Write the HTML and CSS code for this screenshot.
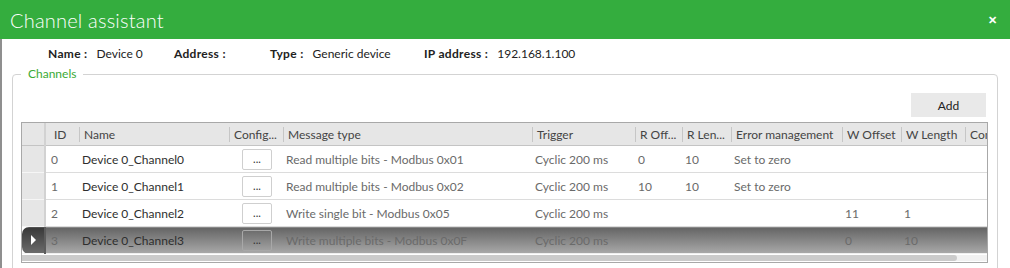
FILE: index.html
```html
<!DOCTYPE html>
<html lang="en">
<head>
    <meta charset="UTF-8">
    <title>Channel assistant</title>
    <link rel="stylesheet" href="styles.css">
</head>
<body>
    <div class="window">
        <header class="titlebar">
            <h1>Channel assistant</h1>
            <span class="close">&#x2715;</span>
        </header>

        <div class="window-body">
            <div class="device-info">
                <span class="field field-name"><b>Name :</b> Device 0</span>
                <span class="field field-address"><b>Address :</b></span>
                <span class="field field-type"><b>Type :</b> Generic device</span>
                <span class="field"><b>IP address :</b> 192.168.1.100</span>
            </div>

            <fieldset class="channels">
                <legend>Channels</legend>
                <div class="toolbar">
                    <button class="btn-add">Add</button>
                </div>

                <div class="grid">
                    <table>
                        <colgroup>
                            <col style="width:23px">
                            <col style="width:34px">
                            <col style="width:150px">
                            <col style="width:54px">
                            <col style="width:249px">
                            <col style="width:103px">
                            <col style="width:47px">
                            <col style="width:49px">
                            <col style="width:111px">
                            <col style="width:59px">
                            <col style="width:64px">
                            <col style="width:75px">
                        </colgroup>
                        <thead>
                            <tr>
                                <th class="row-head"></th>
                                <th class="first">ID</th>
                                <th>Name</th>
                                <th>Config...</th>
                                <th>Message type</th>
                                <th>Trigger</th>
                                <th>R Off...</th>
                                <th>R Len...</th>
                                <th>Error management</th>
                                <th>W Offset</th>
                                <th>W Length</th>
                                <th>Comment</th>
                            </tr>
                        </thead>
                        <tbody id="rows">
                            <!-- rows added by script -->
                        </tbody>
                    </table>
                    <div class="hscroll"><div class="thumb"></div></div>
                </div>
            </fieldset>
        </div>
    </div>

    <script>
        const channels = [
            { id: 0, type: "Read multiple bits - Modbus 0x01", rOff: "0", rLen: "10", err: "Set to zero", wOff: "", wLen: "" },
            { id: 1, type: "Read multiple bits - Modbus 0x02", rOff: "10", rLen: "10", err: "Set to zero", wOff: "", wLen: "" },
            { id: 2, type: "Write single bit - Modbus 0x05", rOff: "", rLen: "", err: "", wOff: "11", wLen: "1" },
            { id: 3, type: "Write multiple bits - Modbus 0x0F", rOff: "", rLen: "", err: "", wOff: "0", wLen: "10" }
        ];
        const selected = 3;

        const rows = document.getElementById('rows');

        channels.forEach((ch) => {
            const tr = document.createElement('tr');
            if (ch.id === selected) tr.classList.add('selected');

            tr.innerHTML = `
                <td class="row-head">${ch.id === selected ? '<span class="caret"></span>' : ''}</td>
                <td class="muted id">${ch.id}</td>
                <td class="name">Device 0_Channel${ch.id}</td>
                <td class="config"><button class="btn-dots">...</button></td>
                <td class="muted">${ch.type}</td>
                <td class="muted">Cyclic 200 ms</td>
                <td class="muted">${ch.rOff}</td>
                <td class="muted">${ch.rLen}</td>
                <td class="muted">${ch.err}</td>
                <td class="muted">${ch.wOff}</td>
                <td class="muted">${ch.wLen}</td>
                <td></td>
            `;
            rows.appendChild(tr);
        });
    </script>
</body>
</html>
```

FILE: styles.css
```css
html, body {
    margin: 0;
    padding: 0;
    background-color: #fff;
}

body {
    font-family: Lato, "Open Sans", sans-serif;
    font-size: 12px;
    color: #222;
    width: 1010px;
    height: 268px;
    overflow: hidden;
}

.window {
    height: 268px;
}

.titlebar {
    height: 39px;
    background-color: #34ad3e;
    color: #fff;
    display: flex;
    align-items: center;
    justify-content: space-between;
    padding: 0 13px 0 10px;
}

.titlebar h1 {
    margin: 0;
    font-size: 20px;
    font-weight: 300;
    letter-spacing: 0.2px;
}

.close {
    font-size: 11px;
    font-weight: bold;
}

.window-body {
    border-left: 2px solid #8f8f8f;
    height: 229px;
    box-sizing: border-box;
    padding: 6px 12px 0 10px;
}

.device-info {
    display: flex;
    align-items: center;
    height: 16px;
    padding-left: 36px;
    margin-bottom: 5px;
}

.device-info .field {
    white-space: nowrap;
}

.device-info .field-name {
    width: 126px;
}

.device-info .field-address {
    width: 96px;
}

.device-info .field-type {
    width: 154px;
}

.device-info b {
    margin-right: 6px;
    color: #222;
    letter-spacing: 0.3px;
}

.channels {
    margin: 0;
    min-width: 0;
    padding: 0 9px 0 8px;
    border: 1px solid #d3d3d3;
    border-radius: 4px;
    height: 260px;
}

.channels legend {
    color: #3aaa35;
    padding: 0 7px;
    line-height: 16px;
}

.toolbar {
    display: flex;
    justify-content: flex-end;
    padding: 11px 2px 5px 0;
}

.btn-add {
    width: 75px;
    height: 24px;
    border: none;
    background-color: #e9e9e9;
    font-family: inherit;
    font-size: 12px;
    color: #222;
}

.grid {
    border: 1px solid #a8a8a8;
    overflow: hidden;
}

.grid table {
    border-collapse: collapse;
    table-layout: fixed;
    width: 1018px;
}

.grid th {
    height: 22px;
    padding: 0 0 0 5px;
    text-align: left;
    font-weight: normal;
    color: #444;
    background-color: #e6e6e6;
    background-image: linear-gradient(#c6c6c6, #c6c6c6);
    background-repeat: no-repeat;
    background-position: left 0 top 4px;
    background-size: 1px 15px;
    border-bottom: 1px solid #c4c4c4;
    white-space: nowrap;
    overflow: hidden;
}

.grid th.first {
    background-image: none;
    padding-left: 8px;
}

.grid th.row-head {
    background-image: none;
    border-right: 2px solid #d2d2d2;
}

.grid td {
    height: 26px;
    padding: 0 0 0 3px;
    border-bottom: 1px solid #dcdcdc;
    white-space: nowrap;
    overflow: hidden;
}

.grid td.row-head {
    padding: 0;
    background-color: #e6e6e6;
    border-right: 2px solid #d2d2d2;
    border-bottom: 1px solid #f6f6f6;
}

.grid td.id {
    padding-left: 5px;
}

.muted {
    color: #6a6a6a;
}

.name {
    color: #2e2e2e;
}

.grid td.config {
    padding-left: 13px;
}

.btn-dots {
    width: 30px;
    height: 21px;
    padding: 0;
    border: 1px solid #cfcfcf;
    border-radius: 2px;
    background-color: #fff;
    font-family: inherit;
    font-size: 11px;
    color: #333;
    line-height: 12px;
}

tr.selected td {
    background: linear-gradient(#646464, #a9a9a9);
    border-bottom: 1px solid #efefef;
}

tr.selected td.row-head {
    background: linear-gradient(#383838, #6c6c6c);
    border-radius: 7px 0 0 7px;
    border-right-color: #5c5c5c;
}

tr.selected .btn-dots {
    background: transparent;
    border-color: #a8a8a8;
}

.caret {
    display: block;
    width: 0;
    height: 0;
    margin-left: 9px;
    border-top: 5px solid transparent;
    border-bottom: 5px solid transparent;
    border-left: 5px solid #fff;
}

.hscroll {
    height: 6px;
    margin: 1px 0 1px;
    background-color: #f1f1f1;
}

.hscroll .thumb {
    width: 935px;
    height: 6px;
    background-color: #cbcbcb;
    border-radius: 0 3px 3px 0;
}
```
